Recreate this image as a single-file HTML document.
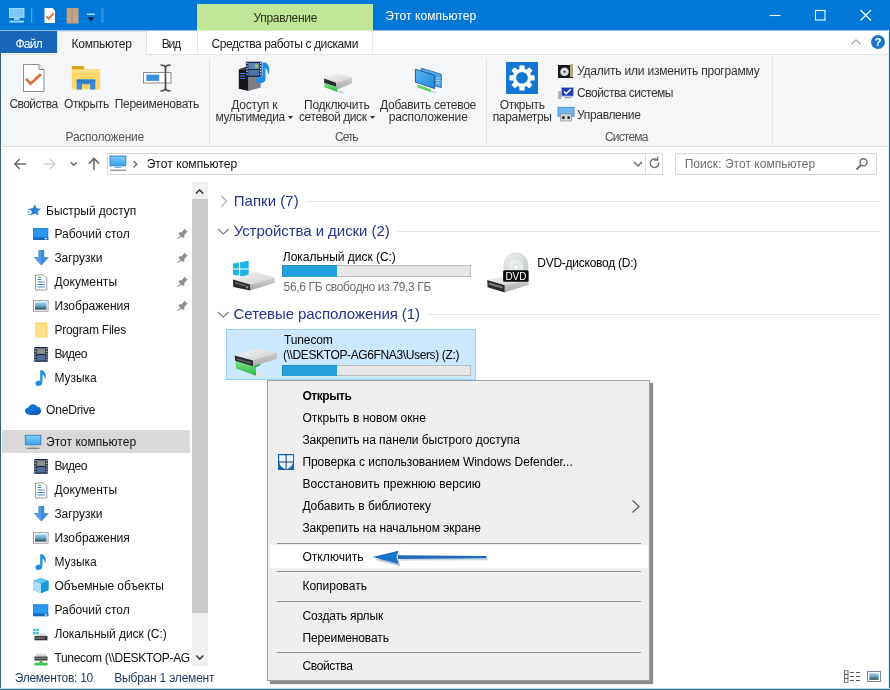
<!DOCTYPE html>
<html lang="ru"><head><meta charset="utf-8"><title>Этот компьютер</title>
<style>
html,body{margin:0;padding:0;}
body{width:890px;height:690px;overflow:hidden;background:#fff;position:relative;font-family:"Liberation Sans",sans-serif;font-size:12px;}
.a{position:absolute;}
.t{position:absolute;white-space:nowrap;line-height:20px;height:20px;}
svg{position:absolute;overflow:visible;}
</style></head><body>
<!-- title bar -->
<div class="a" style="left:0;top:0;width:890px;height:30px;background:#0078d7;"></div>
<!-- tab row -->
<div class="a" style="left:0;top:30px;width:890px;height:24px;background:#fff;"></div>
<div class="a" style="left:0;top:30px;width:890px;height:1px;background:#8cc1ed;"></div>
<div class="a" style="left:197px;top:4px;width:176px;height:26px;background:#bfe795;"></div>
<div class="a" style="left:197px;top:30px;width:176px;height:1px;background:#dff3ca;"></div>
<div class="a" style="left:0px;top:31px;width:57px;height:22px;background:#1766ba;"></div>
<div class="a" style="left:57px;top:31px;width:88px;height:24px;background:#f5f6f7;border:1px solid #e1e2e3;border-bottom:none;box-sizing:content-box;"></div>
<div class="a" style="left:197px;top:31px;width:1px;height:23px;background:#e6e6e6;"></div>
<div class="a" style="left:372px;top:31px;width:1px;height:23px;background:#e6e6e6;"></div>
<!-- ribbon -->
<div class="a" style="left:0;top:55px;width:890px;height:91px;background:#f5f6f7;"></div>
<div class="a" style="left:0;top:54px;width:57px;height:1px;background:#e1e2e3;"></div>
<div class="a" style="left:146px;top:54px;width:744px;height:1px;background:#e1e2e3;"></div>
<div class="a" style="left:0;top:146px;width:890px;height:1px;background:#dadbdc;"></div>
<div class="a" style="left:209px;top:58px;width:1px;height:86px;background:#e2e3e4;"></div>
<div class="a" style="left:486px;top:58px;width:1px;height:86px;background:#e2e3e4;"></div>
<div class="a" style="left:772px;top:58px;width:1px;height:86px;background:#e2e3e4;"></div>
<!-- address bar -->
<div class="a" style="left:107px;top:153px;width:554px;height:20px;border:1px solid #d9d9d9;"></div>
<div class="a" style="left:645px;top:154px;width:1px;height:20px;background:#e0e0e0;"></div>
<div class="a" style="left:675px;top:153px;width:200px;height:20px;border:1px solid #d9d9d9;"></div>
<!-- nav pane -->
<div class="a" style="left:2px;top:430px;width:188px;height:23px;background:#d9d9d9;"></div>
<div class="a" style="left:192px;top:182px;width:16px;height:484px;background:#f0f0f0;"></div>
<div class="a" style="left:192px;top:199px;width:16px;height:414px;background:#c9c9c9;"></div>
<!-- content -->
<div class="a" style="left:306px;top:201px;width:574px;height:1px;background:#e6e6e6;"></div>
<div class="a" style="left:397px;top:231px;width:483px;height:1px;background:#e6e6e6;"></div>
<div class="a" style="left:428px;top:314px;width:452px;height:1px;background:#e6e6e6;"></div>
<div class="a" style="left:282px;top:265px;width:187px;height:10px;background:#e6e6e6;border:1px solid #bcbcbc;box-sizing:content-box;"></div>
<div class="a" style="left:282px;top:265px;width:55px;height:12px;background:#26a0da;box-shadow:inset 1px 1px 0 rgba(0,0,0,0.12);"></div>
<div class="a" style="left:226px;top:329px;width:248px;height:49px;background:#cce8ff;border:1px solid #99d1ff;box-sizing:content-box;"></div>
<div class="a" style="left:282px;top:365px;width:187px;height:9px;background:#e6e6e6;border:1px solid #bcbcbc;box-sizing:content-box;"></div>
<div class="a" style="left:282px;top:365px;width:55px;height:11px;background:#26a0da;box-shadow:inset 1px 1px 0 rgba(0,0,0,0.12);"></div>
<!-- context menu -->
<div class="a" style="left:267px;top:380px;width:381px;height:299px;background:#eeeeee;border:1px solid #a0a0a0;box-sizing:content-box;box-shadow:3px 3px 1px rgba(0,0,0,0.45);"></div>
<div class="a" style="left:270px;top:545px;width:378px;height:23px;background:#fff;"></div>
<div class="a" style="left:277px;top:543px;width:364px;height:1px;background:#919191;"></div>
<div class="a" style="left:277px;top:571px;width:364px;height:1px;background:#919191;"></div>
<div class="a" style="left:277px;top:601px;width:364px;height:1px;background:#919191;"></div>
<div class="a" style="left:277px;top:652px;width:364px;height:1px;background:#919191;"></div>
<!-- window border -->
<div class="a" style="left:0;top:53px;width:1px;height:637px;background:#3a6576;"></div>
<div class="a" style="left:1px;top:53px;width:1px;height:636px;background:#e4f8fd;"></div>
<div class="a" style="left:889px;top:30px;width:1px;height:660px;background:#2f6582;"></div>
<div class="a" style="left:888px;top:30px;width:1px;height:659px;background:#d6f3fb;"></div>
<div class="a" style="left:0;top:688px;width:890px;height:1px;background:#b9e3f0;"></div>
<div class="a" style="left:0;top:689px;width:890px;height:1px;background:#2f6582;"></div>
<svg width="890" height="690" viewBox="0 0 890 690" style="left:0;top:0;will-change:transform;">
<defs>
<linearGradient id="gScr" x1="0" y1="0" x2="0" y2="1"><stop offset="0" stop-color="#7fd0fb"/><stop offset="1" stop-color="#3a9ff0"/></linearGradient>
<linearGradient id="gTop" x1="0" y1="0" x2="1" y2="1"><stop offset="0" stop-color="#f4f4f4"/><stop offset="1" stop-color="#cfcfcf"/></linearGradient>
<linearGradient id="gSide" x1="0" y1="0" x2="0" y2="1"><stop offset="0" stop-color="#d2d2d2"/><stop offset="1" stop-color="#a9a9a9"/></linearGradient>
<linearGradient id="gGreen" x1="0" y1="0" x2="0" y2="1"><stop offset="0" stop-color="#7be38a"/><stop offset="1" stop-color="#2eb84a"/></linearGradient>
<linearGradient id="gMon" x1="0" y1="0" x2="1" y2="1"><stop offset="0" stop-color="#5bb8f3"/><stop offset="1" stop-color="#1f86dd"/></linearGradient>
<linearGradient id="gPic" x1="0" y1="0" x2="0" y2="1"><stop offset="0" stop-color="#9fd0ee"/><stop offset="0.5" stop-color="#6fa6bf"/><stop offset="1" stop-color="#1f4a5a"/></linearGradient>
<linearGradient id="gDisc" x1="0" y1="0" x2="1" y2="1"><stop offset="0" stop-color="#eef2f2"/><stop offset="1" stop-color="#c4cccc"/></linearGradient>
</defs>

<!-- ===== title bar quick access ===== -->
<g>
 <rect x="9.5" y="8.5" width="14.5" height="9" fill="#79c6f7" stroke="#bfe3fb" stroke-width="0.8"/>
 <rect x="14" y="18" width="5.5" height="2" fill="#8ccdf6"/>
 <rect x="9.5" y="20.6" width="14.5" height="2" fill="#9ad6fa"/>
 <rect x="31" y="8" width="1" height="15" fill="#4f9fe0"/><rect x="32.5" y="8" width="1" height="15" fill="#2f86d4"/>
 <path d="M44.5 8h8l2.5 2.5V23h-10.5z" fill="#fdfdfd"/>
 <path d="M46.3 16.2l2.4 2.6 5-5.6" fill="none" stroke="#e0703a" stroke-width="1.8"/>
 <rect x="66.7" y="8" width="11.8" height="15.5" fill="#c4a486"/>
 <rect x="71.3" y="8" width="1.6" height="15.5" fill="#a58f83" opacity="0.7"/>
 <rect x="87" y="13.6" width="8" height="1.2" fill="#d8ecfb"/>
 <path d="M87.6 17.2h6.8l-3.4 3.8z" fill="#0b1b3a"/>
 <rect x="101.5" y="8" width="1" height="15" fill="#4f9fe0"/><rect x="103" y="8" width="1" height="15" fill="#2f86d4"/>
</g>
<!-- window controls -->
<g stroke="#fff" stroke-width="1.1" fill="none">
 <path d="M769.5 15.5h11"/>
 <rect x="815.5" y="10.5" width="9.5" height="9.5"/>
 <path d="M860.5 10l10.5 10.5M871 10l-10.5 10.5"/>
</g>
<!-- collapse chevron + help -->
<path d="M851.5 44.2l4.5-4.2 4.5 4.2" fill="none" stroke="#a9a9a9" stroke-width="1.5"/>
<circle cx="878" cy="42" r="7" fill="#1a74cc"/>
<text x="878" y="46.3" font-family="Liberation Sans, sans-serif" font-size="11.5" font-weight="bold" fill="#fff" text-anchor="middle">?</text>

<!-- ===== ribbon icons ===== -->
<!-- properties doc -->
<path d="M23.5 64.5h15.5l5 5V91.5h-20.5z" fill="#fff" stroke="#8a8e94" stroke-width="1"/>
<path d="M39 64.5v5h5" fill="#eceef0" stroke="#8a8e94" stroke-width="1"/>
<path d="M26 78.8l4.6 4.8 10.3-9.4" fill="none" stroke="#d86d3a" stroke-width="2.6"/>
<!-- open folder -->
<path d="M71.8 66h11.5l1.5 3h15.4v20.4H71.8z" fill="#fbd668"/>
<path d="M71.8 66h11.5l1.2 3.2H71.8z" fill="#d9a417"/>
<rect x="71.8" y="69.6" width="28.4" height="3" fill="#fde08a"/>
<path d="M76.7 89.4V79.5h18.6v9.9h-5.3v-5.2h-8v5.2z" fill="#3d8bd8"/>
<path d="M76.7 79.5h18.6v3H76.7z" fill="#2f7ac8"/>
<!-- rename -->
<rect x="143.5" y="72.5" width="27.5" height="10.5" fill="#fff" stroke="#8a8e94" stroke-width="1"/>
<rect x="146.4" y="74.6" width="12.8" height="6.3" fill="#3c8fe0"/>
<path d="M160.5 65c3 0 5 1.2 5 3.5v19c0 2.300-2 3.500-5 3.500M170.500 65c-3 0-5 1.200-5 3.500M170.500 91c-3 0-5-1.200-5-3.500" fill="none" stroke="#4d4d4d" stroke-width="1.700"/>
<!-- media access -->
<path d="M238.800 69.500l7.100-2.500 2.700 1.500V91l-9.800-2.300z" fill="#14161a"/>
<path d="M248.600 77h12.100v10.500L248.600 91z" fill="#7d7f84"/>
<path d="M238.800 69.500l7.100-2.500 14.800 4.500v5.500h-12.100v-6z" fill="#3a3d44"/>
<rect x="240.200" y="73" width="5" height="1" fill="#3f8be0"/><rect x="240.200" y="75.500" width="5" height="1" fill="#3f8be0"/><rect x="240.200" y="78" width="5" height="1" fill="#2f6fc0"/>
<rect x="245.900" y="61.700" width="15.800" height="14.900" fill="#16244e"/>
<rect x="248.300" y="63" width="11" height="6" fill="#5d86b8"/><rect x="248.300" y="70" width="11" height="5.600" fill="#4a74a8"/>
<circle cx="256.500" cy="66" r="1.800" fill="#b9c84a"/>
<g fill="#e8eefc"><rect x="246.500" y="62.700" width="1.100" height="1.300"/><rect x="246.500" y="65.400" width="1.100" height="1.300"/><rect x="246.500" y="68.100" width="1.100" height="1.300"/><rect x="246.500" y="70.800" width="1.100" height="1.300"/><rect x="246.500" y="73.500" width="1.100" height="1.300"/><rect x="260" y="62.700" width="1.100" height="1.300"/><rect x="260" y="65.400" width="1.100" height="1.300"/><rect x="260" y="68.100" width="1.100" height="1.300"/><rect x="260" y="70.800" width="1.100" height="1.300"/><rect x="260" y="73.500" width="1.100" height="1.300"/></g>
<path d="M262.400 62.400h3.100c3.500 2 5 6.500 3 12.500-0.500-4-2-6.500-3-7v11.200c0 2.500-2.500 4.200-5.500 4.200s-4.500-1.600-4-3.600 3.200-3.800 6.400-3.300z" fill="#1d8fe6"/>
<!-- connect network drive (small) -->
<g>
 <path d="M324.200 78.500l12.500-5 15.500 3.400-16.200 5.800z" fill="url(#gTop)"/>
 <path d="M336 82.700l16.200-5.800v6.300L336 90z" fill="url(#gSide)"/>
 <path d="M324.200 78.500l11.800 4.200v4l-11.800-3.700z" fill="#2c2d30"/>
 <path d="M324.400 83l12.600 4v4.700l-12.600-4.400z" fill="url(#gGreen)"/>
 <path d="M337 89.500l6.500 2.200v2.200l-6.500-2z" fill="#cfd2d4"/>
</g>
<!-- add network location -->
<g>
 <path d="M421.200 68.200l20.100 6v13.400l-6.400-1.800V75.400L421.200 71z" fill="#4aa7ea" stroke="#2a6fae" stroke-width="0.900"/>
 <path d="M435.800 78h4.600M435.800 80.500h4.600M435.800 83h4.600" stroke="#bfe0f8" stroke-width="0.800"/>
 <path d="M415.400 69.300l19.200 6.100v13.100l-19.200-6.400z" fill="url(#gMon)" stroke="#1f5f9c" stroke-width="1"/>
 <path d="M417.500 84.600l13.500 5v2.600l-13.500-5z" fill="#5ed061"/>
 <path d="M431 90l5 1.800v1.700l-5-1.700z" fill="#d4d6d8"/>
</g>
<!-- settings gear -->
<rect x="506" y="62" width="32" height="32" fill="#1476d2"/>
<g transform="translate(522 77.800)" fill="#fff">
 <circle r="9.300"/>
 <g id="teeth"><rect x="-2.600" y="-12.600" width="5.200" height="5" rx="1"/><rect x="-2.600" y="7.600" width="5.200" height="5" rx="1"/><rect x="-12.600" y="-2.600" width="5" height="5.200" rx="1"/><rect x="7.600" y="-2.600" width="5" height="5.200" rx="1"/></g>
 <use href="#teeth" transform="rotate(45)"/>
 <circle r="5.900" fill="#1476d2"/>
</g>
<!-- small: uninstall -->
<rect x="558" y="65" width="15" height="13" fill="#17181a"/>
<rect x="570" y="64" width="3" height="13" fill="#b5aa78"/>
<circle cx="564.500" cy="71.800" r="4.300" fill="#d9dadb"/><circle cx="564.500" cy="71.800" r="1.100" fill="#3a3a3a"/>
<!-- small: system props -->
<rect x="558.300" y="91" width="3" height="8" fill="#a9adb2"/>
<rect x="561.500" y="87.500" width="12" height="8.600" fill="#1c3fb4" stroke="#9fb4e6" stroke-width="0.800"/>
<path d="M564 91.500l2.200 2.300 4.600-4.600" fill="none" stroke="#fff" stroke-width="1.500"/>
<rect x="564.500" y="97" width="7" height="1.300" fill="#9aa0a6"/>
<!-- small: manage -->
<rect x="558" y="107.300" width="16" height="9" fill="#6cb8ee" stroke="#3e86c6" stroke-width="0.800"/>
<rect x="560.500" y="114" width="11" height="7" fill="#d7d9db" stroke="#8f9396" stroke-width="0.700"/>
<rect x="562.300" y="116.300" width="2.200" height="2.600" fill="#111"/><rect x="567.500" y="116.300" width="2.200" height="2.600" fill="#111"/>
<!-- dropdown arrows in ribbon -->
<path d="M288 116l5 0-2.500 3z" fill="#333"/>
<path d="M370 116l5 0-2.500 3z" fill="#333"/>
<!-- ===== address bar ===== -->
<g fill="none" stroke="#6a6a6a" stroke-width="1.500">
 <path d="M26 164H15M19.800 159l-5 5 5 5"/>
 <path d="M94 170v-11.500M88.800 163.600l5.200-5.200 5.200 5.200"/>
 <path d="M70.800 162.200l3 3 3-3" stroke-width="1.400"/>
</g>
<path d="M43.500 164h11M49.800 159l5 5-5 5" fill="none" stroke="#cfcfcf" stroke-width="1.500"/>
<rect x="110" y="156" width="15.800" height="9.800" fill="url(#gScr)" stroke="#2f7fc4" stroke-width="0.900"/>
<rect x="114.500" y="166.600" width="7" height="1.400" fill="#6fb4e8"/>
<rect x="110" y="169.600" width="16.300" height="1.300" fill="#8a949c"/>
<path d="M133.500 161l3.200 3.200-3.200 3.200" fill="none" stroke="#6a6a6a" stroke-width="1.400"/>
<path d="M634 162l4 4 4-4" fill="none" stroke="#6a6a6a" stroke-width="1.500"/>
<path d="M658.700 162.300a4.300 4.300 0 1 1-1.900-2.700" fill="none" stroke="#6a6a6a" stroke-width="1.300"/>
<path d="M657.600 156.800v3.400h-3.400" fill="none" stroke="#6a6a6a" stroke-width="1.300"/>
<circle cx="863.500" cy="162.300" r="3.500" fill="none" stroke="#6a6a6a" stroke-width="1.400"/>
<path d="M861 165l-4.500 4.500" stroke="#6a6a6a" stroke-width="1.800"/>

<!-- ===== nav pane icons ===== -->
<!-- quick access star -->
<path d="M34.700 204.300l1.900 3.900 4.100 0.500-3.100 2.700 0.900 4.200-3.800-2.200-3.800 2.200 1-4.200-3.200-2.700 4.200-0.500z" fill="#2b7fd8"/>
<path d="M27.500 209.500h3M27 212h3.500M28 214.300h3" stroke="#5aa2e6" stroke-width="0.900"/>
<!-- desktop -->
<g id="icDesk"><rect x="33" y="228" width="15.300" height="12" fill="#1f8ae8"/><rect x="33" y="237.500" width="15.300" height="2.500" fill="#1669c0"/><rect x="34.200" y="229.200" width="12.900" height="7.500" fill="#2d97f0"/><rect x="44.600" y="238" width="2.400" height="1.300" fill="#cfe6fb"/></g>
<use href="#icDesk" y="376.200"/>
<!-- downloads -->
<g id="icDown"><path d="M38.600 250h5.600v7.300h4.700l-7.500 8.200-7.500-8.200h4.700z" fill="#3b86d4"/><path d="M38.600 250h2.800v15.500l-7.500-8.200h4.700z" fill="#4f9ae2"/></g>
<use href="#icDown" y="256"/>
<!-- documents -->
<g id="icDoc"><path d="M35.500 275h8.300l3 3v12H35.500z" fill="#fff" stroke="#8d9399" stroke-width="0.900"/><path d="M37.500 279.500h4M37.500 282h7.300M37.500 284.500h7.300M37.500 287h7.300" stroke="#3f8ad6" stroke-width="1"/><path d="M38 277.300h3" stroke="#4caf50" stroke-width="1"/></g>
<use href="#icDoc" y="208"/>
<!-- pictures -->
<g id="icPic"><rect x="33.400" y="300.700" width="14.700" height="10.500" fill="#fff" stroke="#8d9399" stroke-width="0.900"/><rect x="35" y="302.300" width="11.500" height="7.300" fill="url(#gPic)"/></g>
<use href="#icPic" y="232"/>
<!-- folder -->
<path d="M35.300 322.500h11.500l0.800 3v12H35.300z" fill="#fbd66b"/><path d="M36.500 324h9.500v12.500h-9.500z" fill="#fce08c"/>
<!-- video -->
<g id="icVid"><rect x="34.200" y="347" width="13.600" height="14.800" fill="#1b2546"/><rect x="36.600" y="348.300" width="8.800" height="5.600" fill="#8a8f86"/><rect x="36.600" y="355" width="8.800" height="5.600" fill="#4f6e96"/><g fill="#dfe6f5"><rect x="34.800" y="348" width="1" height="1.200"/><rect x="34.800" y="350.800" width="1" height="1.200"/><rect x="34.800" y="353.600" width="1" height="1.200"/><rect x="34.800" y="356.400" width="1" height="1.200"/><rect x="34.800" y="359.200" width="1" height="1.200"/><rect x="46.200" y="348" width="1" height="1.200"/><rect x="46.200" y="350.800" width="1" height="1.200"/><rect x="46.200" y="353.600" width="1" height="1.200"/><rect x="46.200" y="356.400" width="1" height="1.200"/><rect x="46.200" y="359.200" width="1" height="1.200"/></g></g>
<use href="#icVid" y="112"/>
<!-- music -->
<g id="icMus"><path d="M40.200 370.300h2.200c3 1.500 4.300 5 2.800 9.200-0.300-2.800-1.500-4.500-2.800-5v8.300c0 2-1.800 3.200-4 3.200s-3.500-1.300-3-2.900 2.600-2.800 4.800-2.400z" fill="#1e90e4"/></g>
<use href="#icMus" y="184"/>
<!-- onedrive -->
<path d="M29.500 414.700c-2.500 0-4.500-1.500-4.500-3.600 0-1.900 1.500-3.300 3.400-3.500 0.600-2 2.400-3.300 4.600-3.300 1.900 0 3.500 1 4.300 2.500 2.200 0 3.700 1.600 3.700 3.800 0 2.300-1.700 4.100-4 4.100z" fill="#1173d4"/>
<path d="M29 414.700c2-3 6-5.500 12-4.500 0 2.500-1.700 4.500-4 4.500z" fill="#0d5fb4"/>
<!-- this pc -->
<rect x="25.300" y="435.300" width="15.500" height="9.500" fill="url(#gScr)" stroke="#2f7fc4" stroke-width="0.900"/>
<rect x="30.500" y="445.300" width="5" height="2" fill="#b8c4cc"/>
<rect x="26.500" y="447.700" width="13" height="1.300" fill="#7d8a94"/>
<!-- 3d objects -->
<path d="M41 578l7.500 2.800v9.200L41 593.200l-7.500-3.200v-9.200z" fill="#36b3ea"/>
<path d="M33.500 580.800L41 583.600v9.600l-7.500-3.200z" fill="#a9def6"/>
<path d="M41 578l7.500 2.800L41 583.600l-7.500-2.800z" fill="#5fc8f2"/>
<path d="M41 583.600l7.500-2.800v9.200L41 593.200z" fill="#1a97d8"/>
<!-- local disk small -->
<g fill="#2eb5e8"><rect x="33.300" y="628.700" width="2.400" height="2.500"/><rect x="36.400" y="628.700" width="2.400" height="2.500"/><rect x="33.300" y="631.900" width="2.400" height="2.500"/><rect x="36.400" y="631.900" width="2.400" height="2.500"/></g>
<path d="M36 634l9-0.800 2.500 2.800H34.500z" fill="#d9dadb"/>
<rect x="34.500" y="636" width="13" height="4.300" fill="#3a3c40"/>
<rect x="35.500" y="637.500" width="9" height="1" fill="#8a8d92"/>
<!-- net drive small -->
<path d="M36.500 653.500h9l2 3h-13z" fill="#dcdddd"/>
<rect x="34.500" y="656.500" width="13" height="4" fill="#3a3c40"/>
<rect x="35.500" y="657.800" width="11" height="1" fill="#9a9da2"/>
<rect x="39.500" y="660.500" width="3" height="2.500" fill="#3cc251"/>
<rect x="34.500" y="662.800" width="13" height="2.700" fill="#3cc251"/>
<!-- pins -->
<g id="pin" fill="#8f8f8f"><path d="M184.100 228.600l3.900 3.400-1.500 0.600-2.300 2.700 0.300 2.200-1.500 0.400-4.600-4.300 0.500-1.400 2.300 0.200 2.500-2.300z"/><path d="M180.400 235.300l0.900 0.900-3.800 3-0.300-0.400z"/></g>
<use href="#pin" y="24"/><use href="#pin" y="48"/><use href="#pin" y="72"/>
<!-- scrollbar arrows -->
<path d="M196 193.500l3.600-3.600 3.600 3.600" fill="none" stroke="#404040" stroke-width="1.700"/>
<path d="M196.300 655.500l3.500 3.600 3.500-3.600" fill="none" stroke="#404040" stroke-width="1.700"/>

<!-- ===== content ===== -->
<path d="M221.500 196l5 5.200-5 5.200" fill="none" stroke="#a6a6a6" stroke-width="1.100"/>
<path d="M218 229l5.300 5 5.300-5" fill="none" stroke="#7a7a7a" stroke-width="1.100"/>
<path d="M218 312l5.300 5 5.300-5" fill="none" stroke="#7a7a7a" stroke-width="1.100"/>
<!-- local disk C -->
<g fill="#1fb2e6">
 <path d="M233 263.400l5.900-1v6H233z"/><path d="M240.100 262.200l8.600-1.400v7.600h-8.600z"/>
 <path d="M233 269.600h5.900v6.100l-5.900-1z"/><path d="M240.100 269.600h8.600v7.800l-8.600-1.500z"/>
</g>
<path d="M232.900 279.500l23.600-7.500 18.100 5.500-24.400 7.100z" fill="url(#gTop)"/>
<path d="M250.200 284.600l24.400-7.100v5.500l-24.400 7.500z" fill="url(#gSide)"/>
<path d="M232.900 279.500l17.300 5.100v5.900l-16.900-3.500z" fill="#2b2c2f"/>
<path d="M235 282l13.500 4v1.200l-13.500-3.600z" fill="#6a6e70"/>
<rect x="246" y="287" width="2" height="1.200" fill="#62c462"/>
<!-- DVD -->
<path d="M487.200 280.100l16-4h25.400v3.200l-23.900 6z" fill="url(#gTop)"/>
<path d="M504.700 285.300l23.900-6v5.600l-23.900 7.500z" fill="url(#gSide)"/>
<path d="M487.200 280.100l17.500 5.200v7.100l-17.100-5.100z" fill="#2b2c2f"/>
<path d="M489 282.500l13.500 4v2l-13.500-3.800z" fill="#77797c"/>
<path d="M504 270.500v-5.600a12 12 0 0 1 24 0v5.600z" fill="url(#gDisc)" stroke="#c9cfcf" stroke-width="0.600"/>
<path d="M509 270.500v-4.500a7 7 0 0 1 14 0v4.500z" fill="#e6ecea"/>
<path d="M513.300 269.800v-2.600a2.700 2.700 0 0 1 5.400 0v2.600z" fill="#fff" stroke="#b9c0c0" stroke-width="0.600"/>
<rect x="503.100" y="270.200" width="25.500" height="11.600" rx="1.500" fill="#0c0c0c"/>
<text x="515.900" y="279.700" font-family="Liberation Sans, sans-serif" font-size="10.500" fill="#fff" text-anchor="middle" textLength="21" lengthAdjust="spacingAndGlyphs">DVD</text>
<!-- network drive Z -->
<path d="M234.700 355.600l22.800-6.900 19.500 3.700-24 8.100z" fill="url(#gTop)"/>
<path d="M253 360.500l24-8.100v6.400l-24 7.300z" fill="url(#gSide)"/>
<path d="M235.600 360.500l20.400 6.500v8.700l-20-7.100z" fill="url(#gGreen)"/>
<path d="M253 366.100l7.500-2.300v1.500l-5 2.200z" fill="#35a84a"/>
<path d="M234.700 355.600l18.300 4.900v5.800l-17.900-5.600z" fill="#2b2c2f"/>
<path d="M237 358.500l13.500 3.800v1.500l-13.500-4z" fill="#6a6e70"/>
<path d="M256.500 371l6.600 2v3.700l-6.600-2.200z" fill="#e3e5e6"/>

<!-- ===== context menu ===== -->
<rect x="278" y="454" width="16" height="16" fill="#1565ab"/>
<path d="M279.200 455.300h13.800v6.400c0 3.800-3.400 6.300-6.900 7.900-3.500-1.600-6.900-4.100-6.900-7.900z" fill="#e6f5ff"/>
<path d="M286.100 454.500v15.300M278.500 462h15.200" stroke="#0a2c4e" stroke-width="0.900"/>
<path d="M632.500 500.500l6.500 6-6.500 6" fill="none" stroke="#555" stroke-width="1.200"/>
<!-- annotation arrow -->
<path d="M399 556.200L486.600 556.800v1.600L399 558.800z" fill="#c9d6e8" transform="translate(1.500 1.800)"/>
<path d="M374 558.300l25.500-5.800-2 5.500 2 7z" fill="#b9c7dc" transform="translate(1 1.500)"/>
<path d="M398 555.300L486.600 556v2.300L398 559z" fill="#2568b6"/>
<path d="M372.600 557l26-6.300-2.300 6.300 2.300 7z" fill="#1b72c9"/>

<!-- ===== status bar view icons ===== -->
<g fill="none" stroke="#555" stroke-width="0.800"><rect x="844.400" y="670.700" width="3.600" height="3.600"/><rect x="844.400" y="674.700" width="3.600" height="3.600"/><rect x="844.400" y="678.700" width="3.600" height="3.600"/></g>
<path d="M849.800 672.500h4M856 672.500h4M849.800 676.500h4M856 676.500h4M849.800 680.500h4M856 680.500h4" stroke="#555" stroke-width="1"/>
<rect x="867.500" y="671.500" width="13" height="10" fill="#fff" stroke="#6f7f92" stroke-width="0.900"/>
<rect x="869.300" y="673.200" width="9.400" height="6.600" fill="url(#gPic)"/>
</svg>

<div class="a" style="left:0;top:0;width:890px;height:690px;will-change:transform;">
<span class="t" style="top:6.2px;left:385.3px;font-size:12px;color:#fff;letter-spacing:0.090px;">Этот компьютер</span>
<span class="t" style="top:8.4px;left:253.5px;font-size:12px;color:#2c3320;letter-spacing:-0.322px;">Управление</span>
<span class="t" style="top:33.5px;left:15.5px;font-size:12px;color:#fff;letter-spacing:-0.754px;">Файл</span>
<span class="t" style="top:33.5px;left:71.6px;font-size:12px;color:#222;letter-spacing:-0.234px;">Компьютер</span>
<span class="t" style="top:33.5px;left:161.7px;font-size:12px;color:#222;letter-spacing:-1.073px;">Вид</span>
<span class="t" style="top:33.5px;left:211.5px;font-size:12px;color:#222;letter-spacing:-0.411px;">Средства работы с дисками</span>
<span class="t" style="top:94.2px;left:9.5px;font-size:12px;color:#333;letter-spacing:-0.588px;">Свойства</span>
<span class="t" style="top:94.2px;left:63.9px;font-size:12px;color:#333;letter-spacing:-0.306px;">Открыть</span>
<span class="t" style="top:94.2px;left:114.7px;font-size:12px;color:#333;letter-spacing:-0.283px;">Переименовать</span>
<span class="t" style="top:127px;left:65.6px;font-size:12px;color:#555;letter-spacing:-0.273px;">Расположение</span>
<span class="t" style="top:94.5px;left:231.2px;font-size:12px;color:#333;letter-spacing:-0.207px;">Доступ к</span>
<span class="t" style="top:107px;left:215.5px;font-size:12px;color:#333;letter-spacing:-0.399px;">мультимедиа</span>
<span class="t" style="top:94.5px;left:304px;font-size:12px;color:#333;letter-spacing:-0.228px;">Подключить</span>
<span class="t" style="top:107px;left:299px;font-size:12px;color:#333;letter-spacing:-0.385px;">сетевой диск</span>
<span class="t" style="top:94.5px;left:380px;font-size:12px;color:#333;letter-spacing:-0.267px;">Добавить сетевое</span>
<span class="t" style="top:107px;left:388.7px;font-size:12px;color:#333;letter-spacing:-0.137px;">расположение</span>
<span class="t" style="top:127px;left:335px;font-size:12px;color:#555;letter-spacing:-1.026px;">Сеть</span>
<span class="t" style="top:94.5px;left:499.7px;font-size:12px;color:#333;letter-spacing:-0.306px;">Открыть</span>
<span class="t" style="top:107px;left:492.7px;font-size:12px;color:#333;letter-spacing:-0.316px;">параметры</span>
<span class="t" style="top:60.5px;left:577px;font-size:12px;color:#333;letter-spacing:-0.205px;">Удалить или изменить программу</span>
<span class="t" style="top:82.5px;left:577px;font-size:12px;color:#333;letter-spacing:-0.478px;">Свойства системы</span>
<span class="t" style="top:104.5px;left:577px;font-size:12px;color:#333;letter-spacing:-0.322px;">Управление</span>
<span class="t" style="top:127px;left:605px;font-size:12px;color:#555;letter-spacing:-0.833px;">Система</span>
<span class="t" style="top:153.8px;left:146.7px;font-size:12px;color:#111;letter-spacing:0.055px;">Этот компьютер</span>
<span class="t" style="top:153.8px;left:684.7px;font-size:12px;color:#6d6d6d;letter-spacing:0.040px;">Поиск: Этот компьютер</span>
<span class="t" style="top:200.5px;left:46.1px;font-size:12px;color:#111;letter-spacing:-0.081px;">Быстрый доступ</span>
<span class="t" style="top:224.2px;left:54.4px;font-size:12px;color:#111;letter-spacing:-0.002px;">Рабочий стол</span>
<span class="t" style="top:248.2px;left:54.4px;font-size:12px;color:#111;letter-spacing:-0.037px;">Загрузки</span>
<span class="t" style="top:272.3px;left:54.4px;font-size:12px;color:#111;letter-spacing:0.105px;">Документы</span>
<span class="t" style="top:296.2px;left:54.4px;font-size:12px;color:#111;letter-spacing:-0.011px;">Изображения</span>
<span class="t" style="top:320.2px;left:54.4px;font-size:12px;color:#111;letter-spacing:-0.238px;">Program Files</span>
<span class="t" style="top:344px;left:54.4px;font-size:12px;color:#111;letter-spacing:-0.533px;">Видео</span>
<span class="t" style="top:368px;left:54.4px;font-size:12px;color:#111;letter-spacing:-0.009px;">Музыка</span>
<span class="t" style="top:400px;left:46.1px;font-size:12px;color:#111;letter-spacing:-0.186px;">OneDrive</span>
<span class="t" style="top:431.8px;left:46.1px;font-size:12px;color:#111;letter-spacing:0.019px;">Этот компьютер</span>
<span class="t" style="top:456px;left:54.4px;font-size:12px;color:#111;letter-spacing:-0.533px;">Видео</span>
<span class="t" style="top:480.2px;left:54.4px;font-size:12px;color:#111;letter-spacing:0.105px;">Документы</span>
<span class="t" style="top:504px;left:54.4px;font-size:12px;color:#111;letter-spacing:-0.037px;">Загрузки</span>
<span class="t" style="top:528px;left:54.4px;font-size:12px;color:#111;letter-spacing:-0.011px;">Изображения</span>
<span class="t" style="top:552px;left:54.4px;font-size:12px;color:#111;letter-spacing:-0.009px;">Музыка</span>
<span class="t" style="top:576px;left:54.4px;font-size:12px;color:#111;letter-spacing:-0.058px;">Объемные объекты</span>
<span class="t" style="top:600px;left:54.4px;font-size:12px;color:#111;letter-spacing:-0.002px;">Рабочий стол</span>
<span class="t" style="top:624.3px;left:54.4px;font-size:12px;color:#111;letter-spacing:-0.072px;">Локальный диск (C:)</span>
<span class="t" style="top:648px;left:54.4px;font-size:12px;color:#111;letter-spacing:-0.312px;">Tunecom (\\DESKTOP-AG</span>
<span class="t" style="top:667.8px;left:14.8px;font-size:12px;color:#1e395b;letter-spacing:-0.284px;">Элементов: 10</span>
<span class="t" style="top:667.8px;left:114.3px;font-size:12px;color:#1e395b;letter-spacing:-0.213px;">Выбран 1 элемент</span>
<span class="t" style="top:191.2px;left:233.7px;font-size:15px;color:#24348a;letter-spacing:0.035px;">Папки (7)</span>
<span class="t" style="top:221.2px;left:233.7px;font-size:15px;color:#24348a;letter-spacing:-0.058px;">Устройства и диски (2)</span>
<span class="t" style="top:304.2px;left:233.6px;font-size:15px;color:#24348a;letter-spacing:-0.069px;">Сетевые расположения (1)</span>
<span class="t" style="top:246.7px;left:282.8px;font-size:12px;color:#000;letter-spacing:-0.030px;">Локальный диск (C:)</span>
<span class="t" style="top:277.2px;left:283.6px;font-size:12px;color:#6d6d6d;letter-spacing:-0.350px;">56,6 ГБ свободно из 79,3 ГБ</span>
<span class="t" style="top:253.2px;left:537.3px;font-size:12px;color:#000;letter-spacing:-0.258px;">DVD-дисковод (D:)</span>
<span class="t" style="top:330.3px;left:284px;font-size:12px;color:#000;letter-spacing:-0.125px;">Tunecom</span>
<span class="t" style="top:345px;left:283px;font-size:12px;color:#000;letter-spacing:-0.371px;">(\\DESKTOP-AG6FNA3\Users) (Z:)</span>
<span class="t" style="top:386.2px;left:302.4px;font-size:12px;color:#000;letter-spacing:-0.423px;font-weight:bold;">Открыть</span>
<span class="t" style="top:408.2px;left:302.4px;font-size:12px;color:#000;letter-spacing:0.015px;">Открыть в новом окне</span>
<span class="t" style="top:430.4px;left:302.4px;font-size:12px;color:#000;letter-spacing:-0.058px;">Закрепить на панели быстрого доступа</span>
<span class="t" style="top:452.3px;left:302.4px;font-size:12px;color:#000;letter-spacing:-0.050px;">Проверка с использованием Windows Defender...</span>
<span class="t" style="top:474.3px;left:302.4px;font-size:12px;color:#000;letter-spacing:0.049px;">Восстановить прежнюю версию</span>
<span class="t" style="top:496.3px;left:302.4px;font-size:12px;color:#000;letter-spacing:-0.049px;">Добавить в библиотеку</span>
<span class="t" style="top:518.2px;left:302.4px;font-size:12px;color:#000;letter-spacing:-0.033px;">Закрепить на начальном экране</span>
<span class="t" style="top:546.8px;left:302.4px;font-size:12px;color:#000;letter-spacing:0.072px;">Отключить</span>
<span class="t" style="top:576.3px;left:302.4px;font-size:12px;color:#000;letter-spacing:-0.003px;">Копировать</span>
<span class="t" style="top:605.5px;left:302.4px;font-size:12px;color:#000;letter-spacing:-0.152px;">Создать ярлык</span>
<span class="t" style="top:627.5px;left:302.4px;font-size:12px;color:#000;letter-spacing:-0.122px;">Переименовать</span>
<span class="t" style="top:656.3px;left:302.4px;font-size:12px;color:#000;letter-spacing:-0.325px;">Свойства</span>
</div>
</body></html>
